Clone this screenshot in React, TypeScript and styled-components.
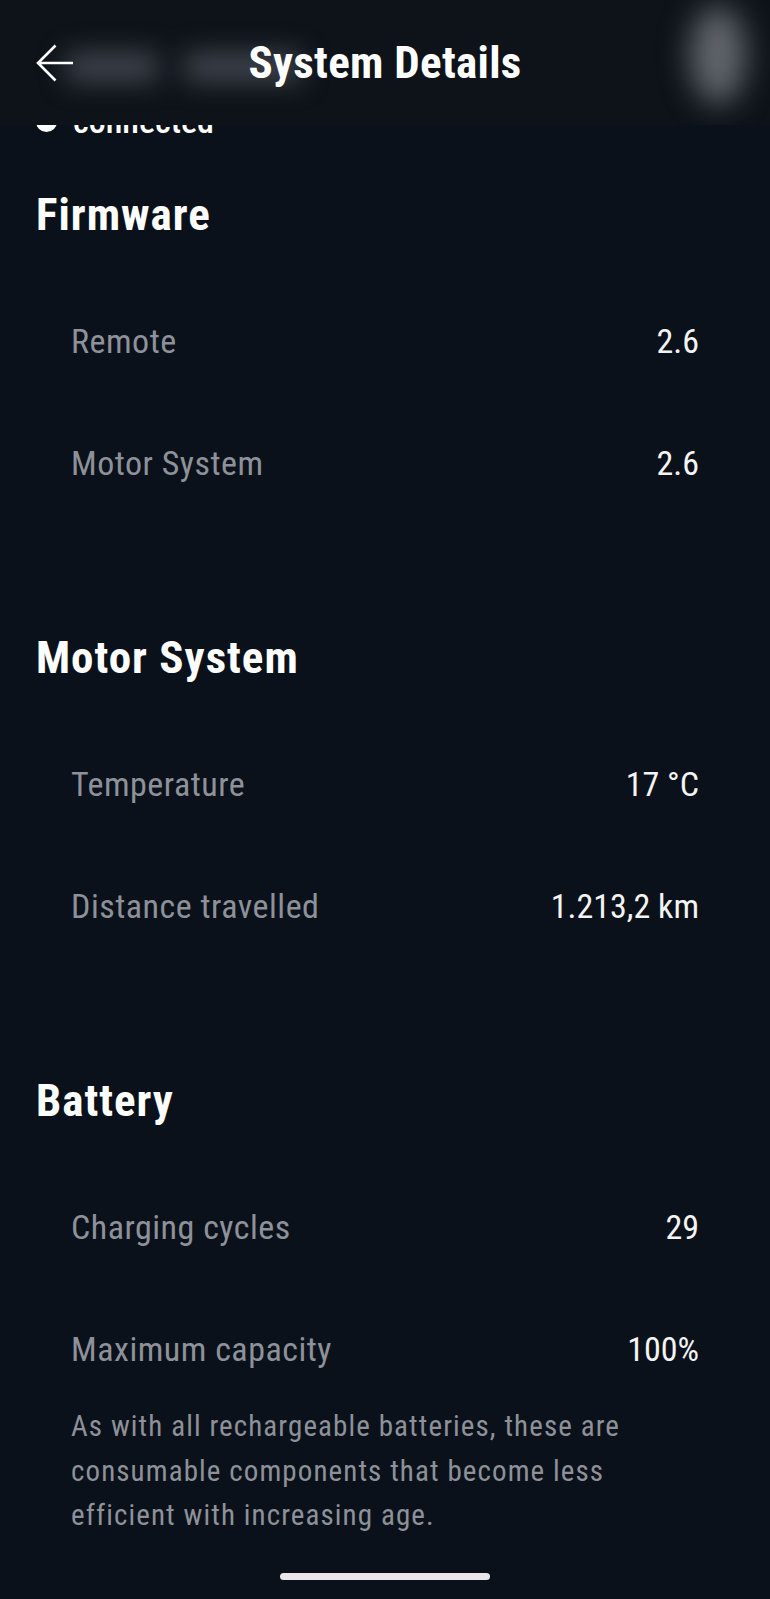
import React from 'react';
import styled, { createGlobalStyle } from 'styled-components';

const GlobalStyle = createGlobalStyle`
  body {
    margin: 0;
    background: #0b111a;
    color: #f4f4f4;
    font-family: "Roboto Condensed", "Roboto", "Liberation Sans", sans-serif;
  }
`;

interface DetailRow {
  label: string;
  value: string;
}

interface Section {
  title: string;
  rows: DetailRow[];
  note?: string;
}

const sections: Section[] = [
  {
    title: 'Firmware',
    rows: [
      { label: 'Remote', value: '2.6' },
      { label: 'Motor System', value: '2.6' },
    ],
  },
  {
    title: 'Motor System',
    rows: [
      { label: 'Temperature', value: '17 °C' },
      { label: 'Distance travelled', value: '1.213,2 km' },
    ],
  },
  {
    title: 'Battery',
    rows: [
      { label: 'Charging cycles', value: '29' },
      { label: 'Maximum capacity', value: '100%' },
    ],
    note: 'As with all rechargeable batteries, these are consumable components that become less efficient with increasing age.',
  },
];

const BackArrow = () => (
  <svg width="38" height="38" viewBox="0 0 38 38" fill="none">
    <path d="M37 19H2.5M19.5 1.5L2 19l17.5 17.5" stroke="#fff" strokeWidth="2.6" />
  </svg>
);

export default function App() {
  return (
    <>
      <GlobalStyle />
      <Page>
        <Header>
          {/* scrolled-away bike summary, seen blurred through the bar */}
          <HeaderBackdrop aria-hidden>
            <NameBlur>
              <NameWord $w={92} />
              <NameWord $w={118} />
            </NameBlur>
            <BikeShape />
          </HeaderBackdrop>
          <BackButton aria-label="Back">
            <BackArrow />
          </BackButton>
          <Title>System Details</Title>
          <span />
        </Header>

        <Content>
          <Status>
            <StatusDot />
            connected
          </Status>

          {sections.map((section) => (
            <Block key={section.title}>
              <SectionTitle>{section.title}</SectionTitle>
              <Rows>
                {section.rows.map((row) => (
                  <Row key={row.label}>
                    <Label>{row.label}</Label>
                    <Value>{row.value}</Value>
                  </Row>
                ))}
              </Rows>
              {section.note && <Note>{section.note}</Note>}
            </Block>
          ))}
        </Content>

        <Footer>
          <HomeIndicator />
        </Footer>
      </Page>
    </>
  );
}

// Styled Components
const Page = styled.div`
  position: relative;
  min-height: 1599px;
  background: #0b111a;
  overflow: hidden;
`;

const Header = styled.header`
  position: absolute;
  top: 0;
  left: 0;
  right: 0;
  z-index: 2;
  height: 125px;
  box-sizing: border-box;
  padding: 0 36px;
  display: grid;
  grid-template-columns: 1fr auto 1fr;
  align-items: center;
  background: #0e131a;
  overflow: hidden;
`;

const HeaderBackdrop = styled.div`
  position: absolute;
  inset: 0;
  display: flex;
  justify-content: space-between;
  align-items: center;
  padding: 0 24px 0 66px;
  pointer-events: none;
`;

const NameBlur = styled.div`
  display: flex;
  gap: 26px;
  margin-top: 8px;
  filter: blur(13px);
`;

const NameWord = styled.div<{ $w: number }>`
  width: ${(p) => p.$w}px;
  height: 30px;
  border-radius: 6px;
  background: #3f444c;
`;

const BikeShape = styled.div`
  width: 56px;
  height: 98px;
  margin-bottom: 16px;
  border-radius: 50%;
  background: #61656c;
  filter: blur(15px);
`;

const BackButton = styled.button`
  position: relative;
  justify-self: start;
  width: 38px;
  height: 38px;
  padding: 0;
  border: 0;
  background: none;
  display: flex;
`;

const Title = styled.h1`
  position: relative;
  margin: 0;
  font-size: 45px;
  line-height: 54px;
  font-weight: 700;
  letter-spacing: 0.3px;
  color: #ffffff;
  white-space: nowrap;
`;

const Content = styled.main`
  padding-top: 101px;
`;

const Status = styled.div`
  padding: 0 36px;
  display: flex;
  align-items: center;
  gap: 16px;
  font-size: 34px;
  line-height: 40px;
  font-weight: 500;
  color: #ffffff;
`;

const StatusDot = styled.span`
  width: 21px;
  height: 21px;
  border-radius: 50%;
  background: #ffffff;
`;

const Block = styled.section`
  margin-top: 47px;
  & + & {
    margin-top: 148px;
  }
`;

const SectionTitle = styled.h2`
  margin: 0;
  padding: 0 36px;
  font-size: 45px;
  line-height: 54px;
  font-weight: 700;
  letter-spacing: 1px;
  color: #ffffff;
`;

const Rows = styled.div`
  margin-top: 79px;
  padding: 0 71px;
  display: flex;
  flex-direction: column;
  gap: 82px;
`;

const Row = styled.div`
  display: flex;
  justify-content: space-between;
  align-items: baseline;
  font-size: 34px;
  line-height: 40px;
`;

const Label = styled.span`
  color: #8e9199;
  font-weight: 400;
  letter-spacing: 0.5px;
`;

const Value = styled.span`
  color: #f4f4f4;
  font-weight: 400;
`;

const Note = styled.p`
  margin: 35px 0 0;
  padding: 0 71px;
  max-width: 600px;
  font-size: 29px;
  line-height: 44.5px;
  letter-spacing: 1.1px;
  color: #8e9199;
`;

const Footer = styled.div`
  display: flex;
  justify-content: center;
  padding: 35px 0 20px;
`;

const HomeIndicator = styled.div`
  width: 210px;
  height: 7px;
  border-radius: 4px;
  background: #e8e8e8;
`;
